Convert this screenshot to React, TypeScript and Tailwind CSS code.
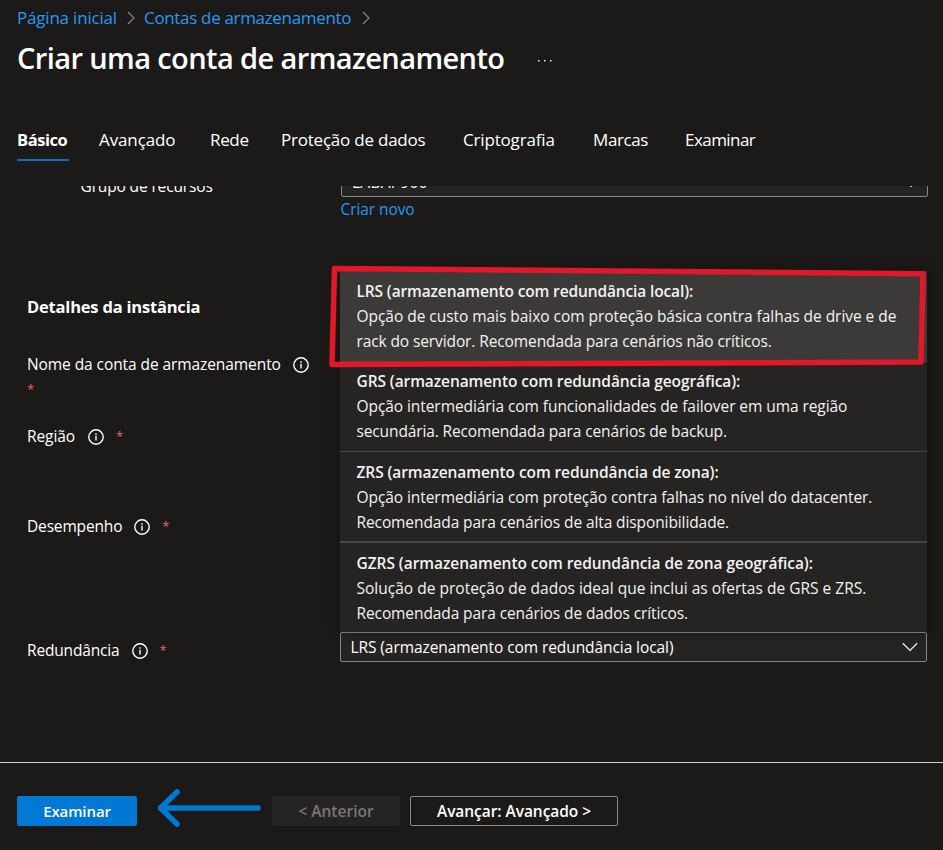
import { ReactNode } from "react";

const tabs = [
  { label: "Avançado", cls: "w-[111px] tracking-[-0.12px]" },
  { label: "Rede", cls: "w-[71px] tracking-[-0.35px]" },
  { label: "Proteção de dados", cls: "w-[182px] tracking-[-0.22px]" },
  { label: "Criptografia", cls: "w-[130px] tracking-[-0.17px]" },
  { label: "Marcas", cls: "w-[92px] tracking-[-0.38px]" },
  { label: "Examinar", cls: "tracking-[-0.55px]" },
];

const options = [
  {
    title: "LRS (armazenamento com redundância local):",
    titleCls: "tracking-[-0.13px]",
    lines: [
      { text: "Opção de custo mais baixo com proteção básica contra falhas de drive e de", cls: "tracking-[-0.04px]" },
      { text: "rack do servidor. Recomendada para cenários não críticos.", cls: "tracking-[-0.11px]" },
    ],
    cls: "bg-[#3b3a39] border-b pt-2 h-[91px]",
  },
  {
    title: "GRS (armazenamento com redundância geográfica):",
    titleCls: "tracking-[-0.09px]",
    lines: [
      { text: "Opção intermediária com funcionalidades de failover em uma região", cls: "tracking-[-0.07px]" },
      { text: "secundária. Recomendada para cenários de backup.", cls: "tracking-[-0.13px]" },
    ],
    cls: "border-b pt-[7px] h-[90px]",
  },
  {
    title: "ZRS (armazenamento com redundância de zona):",
    titleCls: "tracking-[-0.09px]",
    lines: [
      { text: "Opção intermediária com proteção contra falhas no nível do datacenter.", cls: "tracking-[-0.07px]" },
      { text: "Recomendada para cenários de alta disponibilidade.", cls: "tracking-[-0.1px]" },
    ],
    cls: "border-b-2 pt-2 h-[91px]",
  },
  {
    title: "GZRS (armazenamento com redundância de zona geográfica):",
    titleCls: "tracking-[-0.05px]",
    lines: [
      { text: "Solução de proteção de dados ideal que inclui as ofertas de GRS e ZRS.", cls: "tracking-[0.01px]" },
      { text: "Recomendada para cenários de dados críticos.", cls: "tracking-[-0.1px]" },
    ],
    cls: "pt-2 h-[89px]",
  },
];

function Crumb() {
  return (
    <svg className="h-3.5 w-2 shrink-0" viewBox="0 0 8 14" fill="none" stroke="#8a8886" strokeWidth="1.1">
      <path d="M1 1l6 6-6 6" />
    </svg>
  );
}

function Chevron() {
  return (
    <svg className="h-2.5 w-4 shrink-0" viewBox="0 0 16 10" fill="none" stroke="#f3f2f1" strokeWidth="1.3">
      <path d="M.8 1.2L8 8.4l7.2-7.2" />
    </svg>
  );
}

function Info() {
  return (
    <svg className="-mt-px h-4 w-4 shrink-0" viewBox="0 0 16 16" fill="none" stroke="#fff" strokeWidth="1.4">
      <circle cx="8" cy="8" r="7.2" />
      <path d="M8 6.800v4.700M8 4.200v1.500" />
    </svg>
  );
}

function Label({ children, star = true, cls = "mr-3 tracking-[-0.08px]" }: { children: ReactNode; star?: boolean; cls?: string }) {
  return (
    <div className="flex h-6 items-center">
      <span className={cls}>{children}</span>
      <Info />
      {star && <span className="ml-3 text-[13px] text-[#f1606b]">*</span>}
    </div>
  );
}

export default function App() {
  return (
    <div className="relative flex h-[850px] w-[943px] flex-col overflow-hidden whitespace-nowrap bg-[#1b1a19] font-['Open_Sans',sans-serif] text-[15.5px] text-white">
      <header className="h-[186px] shrink-0 pl-[17px]">
        <nav className="flex h-9 items-center text-[17px] text-[#2899f5]">
          <a className="w-[110px] tracking-[-0.2px]">Página inicial</a>
          <Crumb />
          <a className="ml-[9px] w-[218px] tracking-[-0.33px]">Contas de armazenamento</a>
          <Crumb />
        </nav>
        <div className="flex h-11 items-center">
          <h1 className="w-[521px] text-[29px] font-semibold tracking-[-0.6px]">Criar uma conta de armazenamento</h1>
          <svg className="mt-1.5 h-1 w-4" viewBox="0 0 16 4" fill="#f3f2f1">
            <rect x="0" y="1" width="1.5" height="1.5" />
            <rect x="6" y="1" width="1.5" height="1.5" />
            <rect x="12" y="1" width="1.5" height="1.5" />
          </svg>
        </div>
        <div className="mt-[39px] flex h-[42px] text-[17px] leading-[42px]">
          <div className="mr-[30px] w-[52px] border-b-2 border-[#106ebe] text-[16.5px] font-bold tracking-[-0.45px]">Básico</div>
          {tabs.map((t) => (
            <div key={t.label} className={t.cls}>{t.label}</div>
          ))}
        </div>
      </header>

      <main className="flex h-[576px] shrink-0 overflow-hidden pl-[27px]">
        <section className="w-[313px] shrink-0">
          <div className="-mt-3 h-[26px] pl-[53.5px] leading-6 tracking-[-0.14px]">Grupo de recursos</div>
          <h2 className="mt-[95px] h-6 text-[16.5px] font-bold leading-6 tracking-[-0.2px]">Detalhes da instância</h2>
          <div className="mt-[34px]">
            <Label star={false}>Nome da conta de armazenamento</Label>
            <div className="h-6 text-[13px] leading-6 text-[#f1606b]">*</div>
          </div>
          <div className="mt-6"><Label cls="mr-[13px] tracking-[-0.08px]">Região</Label></div>
          <div className="mt-[66px]"><Label cls="mr-3 tracking-[-0.16px]">Desempenho</Label></div>
          <div className="mt-[100px]"><Label cls="mr-3 tracking-[-0.16px]">Redundância</Label></div>
        </section>

        <section className="w-[588px] shrink-0">
          <div className="-mt-[19px] ml-px flex h-[30px] items-center justify-between rounded-[2px] border border-[#8a8886] bg-[#252423] pl-[10px] pr-2">
            <span className="pt-px tracking-[0.25px]">LABAP900</span>
            <div className="pt-0.5"><Chevron /></div>
          </div>
          <a className="block h-6 pl-[0.5px] leading-6 tracking-[-0.08px] text-[#2899f5]">Criar novo</a>
          <div className="relative mt-[411px] h-[30px] w-[587px]">
            <div className="flex h-full items-center justify-between rounded-[2px] border border-[#8a8886] bg-[#252423] pl-[9.5px] pr-2">
              <span className="pt-0.5 tracking-[-0.08px]">LRS (armazenamento com redundância local)</span>
              <Chevron />
            </div>
            <div className="absolute bottom-full left-0 w-full bg-[#252423] text-[#f3f2f1] shadow-[0_0_12px_rgba(0,0,0,0.3)]">
              {options.map((o) => (
                <div key={o.title} className={`border-[#484644] pl-[16.5px] leading-[25px] ${o.cls}`}>
                  <div className={`font-semibold ${o.titleCls}`}>{o.title}</div>
                  {o.lines.map((l) => (
                    <div key={l.text} className={l.cls}>{l.text}</div>
                  ))}
                </div>
              ))}
            </div>
          </div>
        </section>
      </main>

      <footer className="flex h-[88px] shrink-0 border-t border-[#d2d0ce] pl-[17px] pt-[33px] font-semibold">
        <button className="h-[30px] w-[120px] rounded-[2px] bg-[#0078d4] text-[15px] tracking-[-0.1px]">Examinar</button>
        <svg className="-mt-2 ml-5 mr-[10px] h-10 w-[105px]" viewBox="0 0 105 40" fill="none" stroke="#0078d4" strokeWidth="5.5" strokeLinecap="round" strokeLinejoin="round">
          <path d="M101 20H4M20 4L3.500 20L20 36" />
        </svg>
        <button className="h-[30px] w-[128px] rounded-[2px] bg-[#252423] pt-0.5 text-[#797775]">&lt; Anterior</button>
        <button className="ml-[10px] h-[30px] w-[208px] rounded-[2px] border border-[#8a8886] pt-0.5 tracking-[-0.05px]">Avançar: Avançado &gt;</button>
      </footer>

      <svg className="pointer-events-none absolute left-[326px] top-[263px] h-[108px] w-[606px]" viewBox="326 263 606 108" fill="none" stroke="#e3172a" strokeWidth="5.5" strokeLinejoin="round">
        <path d="M334.500 268.500L923 273.800L921 362L332 364.500Z" />
      </svg>
    </div>
  );
}
